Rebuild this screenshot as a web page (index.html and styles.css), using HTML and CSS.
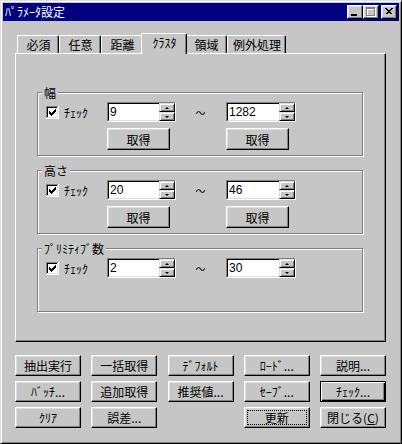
FILE: index.html
```html
<!DOCTYPE html>
<html lang="ja">
<head>
    <meta charset="UTF-8">
    <meta name="viewport" content="width=device-width, initial-scale=1.0">
    <title>ﾊﾟﾗﾒｰﾀ設定</title>
    <link rel="stylesheet" href="styles.css">
</head>
<body>
    <div class="window">
        <div class="titlebar">
            <span class="title">ﾊﾟﾗﾒｰﾀ設定</span>
            <div class="title-buttons">
                <span class="tbtn">
                    <svg width="14" height="12" viewBox="0 0 14 12" shape-rendering="crispEdges">
                        <rect x="3" y="8" width="6" height="2" fill="#000"/>
                    </svg>
                </span>
                <span class="tbtn">
                    <svg width="14" height="12" viewBox="0 0 14 12" shape-rendering="crispEdges">
                        <g fill="#fff">
                            <rect x="3" y="2" width="9" height="2"/>
                            <rect x="3" y="2" width="1" height="9"/>
                            <rect x="11" y="2" width="1" height="9"/>
                            <rect x="3" y="10" width="9" height="1"/>
                        </g>
                        <g fill="#808080">
                            <rect x="2" y="1" width="9" height="2"/>
                            <rect x="2" y="1" width="1" height="9"/>
                            <rect x="10" y="1" width="1" height="9"/>
                            <rect x="2" y="9" width="9" height="1"/>
                        </g>
                    </svg>
                </span>
                <span class="tbtn close">
                    <svg width="14" height="12" viewBox="0 0 14 12" shape-rendering="crispEdges">
                        <path d="M3.5 2.5 L9.5 8.5 M4.5 2.5 L10.5 8.5 M9.5 2.5 L3.5 8.5 M10.5 2.5 L4.5 8.5" stroke="#000" stroke-width="1" fill="none"/>
                    </svg>
                </span>
            </div>
        </div>

        <div class="client">
            <div class="tabs">
                <div class="tab">必須</div>
                <div class="tab">任意</div>
                <div class="tab">距離</div>
                <div class="tab active">ｸﾗｽﾀ</div>
                <div class="tab">領域</div>
                <div class="tab">例外処理</div>
            </div>

            <div class="panel">
                <div class="group">
                    <div class="group-title">幅</div>
                    <div class="group-grid">
                        <label class="check">
                            <svg class="checkbox" width="13" height="13" viewBox="0 0 13 13" shape-rendering="crispEdges">
                                <rect width="13" height="13" fill="#fff"/>
                                <rect width="12" height="1" fill="#808080"/>
                                <rect width="1" height="12" fill="#808080"/>
                                <rect x="1" y="1" width="10" height="1" fill="#000"/>
                                <rect x="1" y="1" width="1" height="10" fill="#000"/>
                                <rect x="1" y="11" width="11" height="1" fill="#dfdfdf"/>
                                <rect x="11" y="1" width="1" height="11" fill="#dfdfdf"/>
                                <path d="M3 5h1v3H3z M4 6h1v3H4z M5 7h1v3H5z M6 6h1v3H6z M7 5h1v3H7z M8 4h1v3H8z M9 3h1v3H9z" fill="#000"/>
                            </svg>
                            ﾁｪｯｸ
                        </label>
                        <div class="spinedit">
                            <span class="field">9</span>
                            <span class="spin"><span class="spin-btn up"></span><span class="spin-btn down"></span></span>
                        </div>
                        <span class="tilde">～</span>
                        <div class="spinedit">
                            <span class="field">1282</span>
                            <span class="spin"><span class="spin-btn up"></span><span class="spin-btn down"></span></span>
                        </div>
                        <button class="btn get left">取得</button>
                        <button class="btn get right">取得</button>
                    </div>
                </div>

                <div class="group">
                    <div class="group-title">高さ</div>
                    <div class="group-grid">
                        <label class="check">
                            <svg class="checkbox" width="13" height="13" viewBox="0 0 13 13" shape-rendering="crispEdges">
                                <rect width="13" height="13" fill="#fff"/>
                                <rect width="12" height="1" fill="#808080"/>
                                <rect width="1" height="12" fill="#808080"/>
                                <rect x="1" y="1" width="10" height="1" fill="#000"/>
                                <rect x="1" y="1" width="1" height="10" fill="#000"/>
                                <rect x="1" y="11" width="11" height="1" fill="#dfdfdf"/>
                                <rect x="11" y="1" width="1" height="11" fill="#dfdfdf"/>
                                <path d="M3 5h1v3H3z M4 6h1v3H4z M5 7h1v3H5z M6 6h1v3H6z M7 5h1v3H7z M8 4h1v3H8z M9 3h1v3H9z" fill="#000"/>
                            </svg>
                            ﾁｪｯｸ
                        </label>
                        <div class="spinedit">
                            <span class="field">20</span>
                            <span class="spin"><span class="spin-btn up"></span><span class="spin-btn down"></span></span>
                        </div>
                        <span class="tilde">～</span>
                        <div class="spinedit">
                            <span class="field">46</span>
                            <span class="spin"><span class="spin-btn up"></span><span class="spin-btn down"></span></span>
                        </div>
                        <button class="btn get left">取得</button>
                        <button class="btn get right">取得</button>
                    </div>
                </div>

                <div class="group">
                    <div class="group-title">ﾌﾟﾘﾐﾃｨﾌﾞ数</div>
                    <div class="group-grid">
                        <label class="check">
                            <svg class="checkbox" width="13" height="13" viewBox="0 0 13 13" shape-rendering="crispEdges">
                                <rect width="13" height="13" fill="#fff"/>
                                <rect width="12" height="1" fill="#808080"/>
                                <rect width="1" height="12" fill="#808080"/>
                                <rect x="1" y="1" width="10" height="1" fill="#000"/>
                                <rect x="1" y="1" width="1" height="10" fill="#000"/>
                                <rect x="1" y="11" width="11" height="1" fill="#dfdfdf"/>
                                <rect x="11" y="1" width="1" height="11" fill="#dfdfdf"/>
                                <path d="M3 5h1v3H3z M4 6h1v3H4z M5 7h1v3H5z M6 6h1v3H6z M7 5h1v3H7z M8 4h1v3H8z M9 3h1v3H9z" fill="#000"/>
                            </svg>
                            ﾁｪｯｸ
                        </label>
                        <div class="spinedit">
                            <span class="field">2</span>
                            <span class="spin"><span class="spin-btn up"></span><span class="spin-btn down"></span></span>
                        </div>
                        <span class="tilde">～</span>
                        <div class="spinedit">
                            <span class="field">30</span>
                            <span class="spin"><span class="spin-btn up"></span><span class="spin-btn down"></span></span>
                        </div>
                    </div>
                </div>
            </div>

            <div class="actions">
                <button class="btn">抽出実行</button>
                <button class="btn">一括取得</button>
                <button class="btn">ﾃﾞﾌｫﾙﾄ</button>
                <button class="btn">ﾛｰﾄﾞ...</button>
                <button class="btn">説明...</button>

                <button class="btn">ﾊﾞｯﾁ...</button>
                <button class="btn">追加取得</button>
                <button class="btn">推奨値...</button>
                <button class="btn">ｾｰﾌﾞ...</button>
                <button class="btn default">ﾁｪｯｸ...</button>

                <button class="btn">ｸﾘｱ</button>
                <button class="btn">誤差...</button>
                <span></span>
                <button class="btn focused">更新</button>
                <button class="btn">閉じる(<u>C</u>)</button>
            </div>
        </div>
    </div>
</body>
</html>
```

FILE: styles.css
```css
:root {
    --face: #c6c6c6;
    --light: #dfdfdf;
    --shadow: #808080;
    --dark: #000000;
    --title: #000080;
}

* {
    box-sizing: border-box;
    margin: 0;
    padding: 0;
}

body {
    background-color: var(--face);
    color: #000;
    font-family: "Noto Sans CJK JP", sans-serif;
    font-size: 12px;
}

.window {
    width: 402px;
    height: 444px;
    background-color: var(--face);
    border: 1px solid;
    border-color: var(--light) var(--dark) var(--dark) var(--light);
    box-shadow: inset 1px 1px #fff, inset -1px -1px var(--shadow);
    padding: 2px;
}

/* title bar */

.titlebar {
    height: 18px;
    background-color: var(--title);
    color: #fff;
    display: flex;
    align-items: center;
    justify-content: space-between;
    padding: 0 2px;
}

.title {
    line-height: 14px;
}

.title-buttons {
    display: flex;
}

.tbtn {
    width: 16px;
    height: 14px;
    display: flex;
    background-color: var(--face);
    border: 1px solid;
    border-color: #fff var(--dark) var(--dark) #fff;
    box-shadow: inset -1px -1px var(--shadow), inset 1px 1px var(--light);
}

.tbtn svg {
    display: block;
}

.tbtn.close {
    margin-left: 2px;
}

/* tabs */

.client {
    padding: 12px 0 0 12px;
}

.tabs {
    height: 20px;
    display: flex;
    align-items: flex-end;
    padding-left: 2px;
}

.tab {
    height: 18px;
    min-width: 42px;
    padding: 0 4px 0 5px;
    display: flex;
    align-items: center;
    justify-content: center;
    border-top: 1px solid #fff;
    border-left: 1px solid #fff;
    border-right: 1px solid var(--dark);
    border-radius: 2px 2px 0 0;
    box-shadow: inset -1px 0 var(--shadow);
    background-color: var(--face);
}

.tab.active {
    position: relative;
    height: 21px;
    min-width: 46px;
    margin: 0 -2px -1px;
    padding-bottom: 3px;
}

.panel {
    width: 371px;
    height: 289px;
    border: 1px solid;
    border-color: #fff var(--dark) var(--dark) #fff;
    box-shadow: inset -1px -1px var(--shadow);
    padding: 38px 0 0 21px;
    display: flex;
    flex-direction: column;
    gap: 14px;
}

/* group boxes */

.group {
    width: 326px;
    height: 64px;
    border: 1px solid var(--shadow);
    box-shadow: inset 1px 1px #fff, 1px 1px #fff;
}

.group-title {
    width: fit-content;
    height: 13px;
    line-height: 13px;
    margin: -7px 0 0 4px;
    padding: 0 2px;
    background-color: var(--face);
}

.group-grid {
    display: grid;
    grid-template-columns: 61px 69px 50px 70px;
    grid-template-rows: 20px 22px;
    row-gap: 6px;
    align-items: center;
    margin: 3px 0 0 8px;
}

.check {
    display: flex;
    align-items: center;
    gap: 5px;
}

.checkbox {
    display: block;
}

.spinedit {
    height: 20px;
    display: flex;
    border: 1px solid;
    border-color: var(--shadow) #fff #fff var(--shadow);
}

.field {
    flex: 1;
    display: flex;
    align-items: center;
    padding: 0 0 1px 1px;
    background-color: #fff;
    border-top: 1px solid var(--dark);
    border-left: 1px solid var(--dark);
    border-bottom: 1px solid var(--light);
    font-family: "Liberation Sans", sans-serif;
    font-size: 12px;
}

.spin {
    width: 16px;
    display: flex;
    flex-direction: column;
}

.spin-btn {
    height: 9px;
    display: flex;
    align-items: center;
    justify-content: center;
    background-color: var(--face);
    border: 1px solid;
    border-color: var(--light) var(--dark) var(--dark) var(--light);
    box-shadow: inset 1px 1px #fff, inset -1px -1px var(--shadow);
}

.spin-btn::after {
    content: "";
    width: 0;
    height: 0;
    border-left: 2px solid transparent;
    border-right: 2px solid transparent;
}

.spin-btn.up::after {
    border-bottom: 2px solid var(--dark);
}

.spin-btn.down::after {
    border-top: 2px solid var(--dark);
}

.tilde {
    text-align: center;
    font-size: 10px;
    padding-right: 1px;
}

/* buttons */

.btn {
    height: 21px;
    display: flex;
    align-items: center;
    justify-content: center;
    font-family: inherit;
    font-size: 12px;
    color: #000;
    background-color: var(--face);
    border: 1px solid;
    border-color: #fff var(--dark) var(--dark) #fff;
    box-shadow: inset -1px -1px var(--shadow), inset 1px 1px var(--light);
    padding: 0;
}

.btn.get {
    width: 63px;
    height: 22px;
}

.btn.left {
    grid-column: 2;
}

.btn.right {
    grid-column: 4;
}

.btn.default {
    border-color: var(--dark);
    box-shadow: inset 1px 1px #fff, inset -1px -1px var(--dark), inset -2px -2px var(--shadow);
}

.btn.focused {
    outline: 1px dotted var(--dark);
    outline-offset: -4px;
}

.btn u {
    text-decoration: underline;
}

.actions {
    width: 371px;
    margin-top: 13px;
    display: grid;
    grid-template-columns: repeat(5, 66px);
    grid-auto-rows: 21px;
    justify-content: space-between;
    row-gap: 5px;
}
```
